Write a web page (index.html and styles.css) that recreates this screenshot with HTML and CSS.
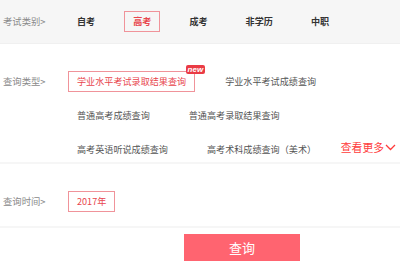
FILE: index.html
```
<!DOCTYPE html>
<html lang="zh-CN">

<head>
  <meta charset="UTF-8">
  <meta name="viewport" content="width=device-width, initial-scale=1.0">
  <title>查询</title>
  <link rel="stylesheet" href="styles.css">
</head>

<body>
  <div class="query">
    <div class="row row-exam">
      <div class="label">考试类别&gt;</div>
      <ul class="options options-exam">
        <li>自考</li>
        <li class="active">高考</li>
        <li>成考</li>
        <li>非学历</li>
        <li>中职</li>
      </ul>
    </div>
    <div class="row row-type">
      <div class="label">查询类型&gt;</div>
      <ul class="options options-type">
        <li class="active">学业水平考试录取结果查询<span class="new">new</span></li>
        <li>学业水平考试成绩查询</li>
        <li>普通高考成绩查询</li>
        <li>普通高考录取结果查询</li>
        <li>高考英语听说成绩查询</li>
        <li>高考术科成绩查询（美术）</li>
      </ul>
      <a class="more" href="#">查看更多<svg width="11" height="7" viewBox="0 0 11 7"><path d="M1 1l4.5 4.5L10 1" fill="none" stroke="#ff3b3b" stroke-width="1.3"/></svg></a>
    </div>
    <div class="row row-time">
      <div class="label">查询时间&gt;</div>
      <ul class="options">
        <li class="active">2017年</li>
      </ul>
    </div>
    <div class="submit">
      <button class="btn">查询</button>
    </div>
  </div>
</body>

</html>
```

FILE: styles.css
```
body {
  margin: 0;
  padding: 0;
  background: #fff;
  font-family: "Noto Sans CJK SC", "Liberation Sans", sans-serif;
  font-size: 9.1px;
  color: #555;
}

ul {
  list-style: none;
  margin: 0;
  padding: 0;
}

.query {
  width: 400px;
}

.row {
  display: flex;
}

.label {
  width: 65px;
  padding-left: 3px;
  flex-shrink: 0;
  color: #8a8a8a;
  font-size: 9.33px;
  line-height: 21px;
}

.options {
  display: flex;
  flex-wrap: wrap;
  column-gap: 21px;
  row-gap: 13px;
}

.options li {
  position: relative;
  height: 19px;
  line-height: 19px;
  padding: 0 8px;
  border: 1px solid transparent;
  white-space: nowrap;
}

.options li.active {
  border-color: #f0939a;
  color: #e8454d;
}

.row-exam {
  height: 43px;
  align-items: center;
  background: #f6f6f6;
  border-bottom: 1px solid #f0f0f0;
}

.options-exam {
  column-gap: 20px;
}

.options-exam li {
  font-weight: bold;
  color: #333;
}

.row-type {
  padding-top: 27px;
  padding-bottom: 2px;
  border-bottom: 2px solid #f6f6f6;
}

.options-type {
  width: 268px;
}

.new {
  position: absolute;
  top: -7px;
  right: -11px;
  height: 9px;
  line-height: 9px;
  padding: 0 2px;
  border-radius: 2px;
  background: #ea3b45;
  color: #fff;
  font-family: "Liberation Sans", sans-serif;
  font-size: 8px;
  font-weight: bold;
  font-style: italic;
}

.more {
  align-self: flex-end;
  display: flex;
  align-items: center;
  gap: 1px;
  margin-left: auto;
  margin-right: 4px;
  margin-bottom: 5px;
  color: #ff3b3b;
  font-size: 10.8px;
  line-height: 16px;
  text-decoration: none;
  white-space: nowrap;
}

.row-time {
  padding-top: 27px;
  padding-bottom: 14px;
  border-bottom: 2px solid #f6f6f6;
}

.submit {
  padding: 6px 0 0 184px;
}

.btn {
  width: 116px;
  height: 27px;
  border: 0;
  background: #ff6470;
  color: #fff;
  font-family: "Noto Sans CJK SC", sans-serif;
  font-size: 13px;
  padding: 0;
}
```
